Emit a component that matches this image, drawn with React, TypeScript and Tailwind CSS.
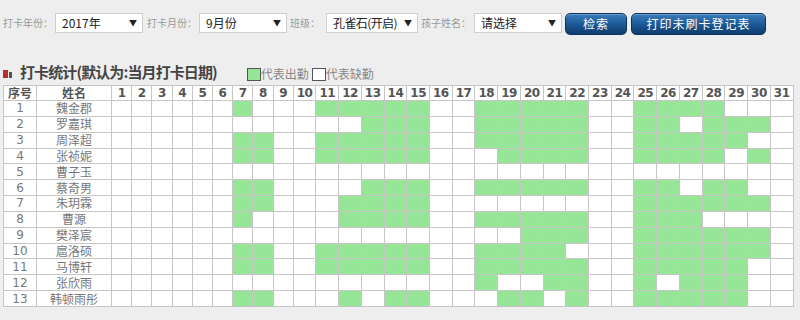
import React from "react";

type Spec = number | [number, number];
const mk = (...spec: Spec[]): Set<number> => {
  const s = new Set<number>();
  spec.forEach((x) => {
    if (typeof x === "number") s.add(x);
    else for (let i = x[0]; i <= x[1]; i++) s.add(i);
  });
  return s;
};

const rows: [string, Set<number>][] = [
  ["魏金郡", mk(7, [11, 15], [18, 22], [25, 28])],
  ["罗嘉琪", mk([13, 15], [18, 22], [25, 26], [28, 30])],
  ["周泽超", mk([7, 8], [11, 15], [18, 22], [25, 29])],
  ["张祯妮", mk([7, 8], [11, 15], [19, 22], [25, 28], 30)],
  ["曹子玉", mk()],
  ["蔡奇男", mk([7, 8], [13, 15], [18, 22], [25, 26], [28, 29])],
  ["朱玥霖", mk([7, 8], [12, 15], [25, 30])],
  ["曹源", mk(7, [12, 15], [18, 22], [25, 27])],
  ["樊泽宸", mk([20, 22], [25, 30])],
  ["扈洛硕", mk([7, 8], [11, 15], [18, 21], [25, 30])],
  ["马博轩", mk([7, 8], [11, 15], [18, 22], [25, 29])],
  ["张欣雨", mk(18, [21, 22], 25, [27, 29])],
  ["韩顿雨彤", mk([7, 8], 12, [14, 15], [19, 20], 22, [25, 29])],
];

const days = Array.from({ length: 31 }, (_, i) => i + 1);

function Select({ text, w, tcls = "" }: { text: string; w: string; tcls?: string }) {
  return (
    <div
      className={`${w} h-[20px] bg-white border border-[#cfcfcf] flex items-center justify-between gap-[2px] pl-[6px] pr-[5px] text-[12px] text-[#222] leading-none whitespace-nowrap`}
    >
      <span className={tcls}>{text}</span>
      <span className="text-[8px] text-[#222]">▼</span>
    </div>
  );
}

function Btn({ text, w }: { text: string; w: string }) {
  return (
    <div
      className={`${w} h-[22px] rounded-[5px] border border-[#0c345e] bg-gradient-to-b from-[#3a7dbd] via-[#1d5a98] to-[#0f3c6c] text-white text-[12px] tracking-[1px] flex items-center justify-center leading-none whitespace-nowrap shadow-[inset_0_1px_0_rgba(255,255,255,0.25)]`}
    >
      {text}
    </div>
  );
}

function Label({ text, cls }: { text: string; cls: string }) {
  return (
    <span className={`${cls} h-[20px] flex items-center text-[10px] text-[#999] leading-none whitespace-nowrap`}>
      {text}
    </span>
  );
}

export default function App() {
  return (
    <div className="w-[800px] h-[320px] overflow-hidden bg-[#eeeeee] font-['Noto_Sans_CJK_SC',sans-serif]">
      {/* top bar */}
      <div className="flex items-start pt-[13px] pl-[3px] h-[35px]">
        <Label text="打卡年份：" cls="w-[52px]" />
        <Select text="2017年" w="w-[88px]" />
        <Label text="打卡月份：" cls="ml-[4px] w-[52px]" />
        <Select text="9月份" w="w-[88px]" />
        <Label text="班级：" cls="ml-[3px] w-[36px]" />
        <Select text="孔雀石(开启)" w="w-[92px]" tcls="tracking-[-0.6px]" />
        <Label text="孩子姓名：" cls="ml-[3px] w-[53px]" />
        <Select text="请选择" w="w-[88px]" />
        <div className="ml-[3px]">
          <Btn text="检索" w="w-[62px]" />
        </div>
        <div className="ml-[4px]">
          <Btn text="打印未刷卡登记表" w="w-[135px]" />
        </div>
      </div>

      {/* section header */}
      <div className="flex items-center h-[22px] mt-[26px] pl-[3px]">
        <div className="flex items-end h-[22px] pb-[5px]">
          <div className="w-[5px] h-[8px] bg-[#c0282d]" />
          <div className="ml-[1px] w-[3px] h-[6px] bg-[#555]" />
        </div>
        <span className="ml-[8px] -mt-[2px] text-[15px] font-bold text-[#444] leading-none tracking-[-0.9px]">
          打卡统计(默认为:当月打卡日期)
        </span>
        <div className="ml-[30px] mt-[4px] w-[14px] h-[13px] bg-[#97e597] border border-[#555]" />
        <span className="mt-[4px] text-[12px] text-[#888] leading-none">代表出勤</span>
        <div className="ml-[3px] mt-[4px] w-[14px] h-[13px] bg-white border border-[#555]" />
        <span className="mt-[4px] text-[12px] text-[#888] leading-none">代表缺勤</span>
      </div>

      {/* table */}
      <table className="ml-[3px] mt-[1.5px] w-[790px] table-fixed border-collapse bg-white text-[12px] leading-none">
        <colgroup>
          <col className="w-[33px]" />
          <col className="w-[75px]" />
          {days.map((d) => (
            <col key={d} className={d < 10 ? "w-[20.2px]" : "w-[22.73px]"} />
          ))}
        </colgroup>
        <thead>
          <tr className="h-[15.5px]">
            <th className="border border-[#c6c6c6] p-0 font-bold text-[#555] text-[12px]">序号</th>
            <th className="border border-[#c6c6c6] p-0 font-bold text-[#555] text-[12px]">姓名</th>
            {days.map((d) => (
              <th
                key={d}
                className="border border-[#c6c6c6] p-0 font-bold text-[#555] text-[12px] font-['DejaVu_Sans',sans-serif] tracking-[-0.5px]"
              >
                {d}
              </th>
            ))}
          </tr>
        </thead>
        <tbody>
          {rows.map(([name, set], i) => (
            <tr key={i} className="h-[15.85px]">
              <td className="border border-[#c6c6c6] p-0 text-center text-[#777] text-[12px] font-['DejaVu_Sans',sans-serif]">
                {i + 1}
              </td>
              <td className="border border-[#c6c6c6] p-0 text-center text-[#777] text-[12px]">{name}</td>
              {days.map((d) => (
                <td
                  key={d}
                  className={
                    set.has(d)
                      ? "border border-[#c6c6c6] p-0 bg-[#97e597]"
                      : "border border-[#c6c6c6] p-0 bg-white"
                  }
                />
              ))}
            </tr>
          ))}
        </tbody>
      </table>
    </div>
  );
}
